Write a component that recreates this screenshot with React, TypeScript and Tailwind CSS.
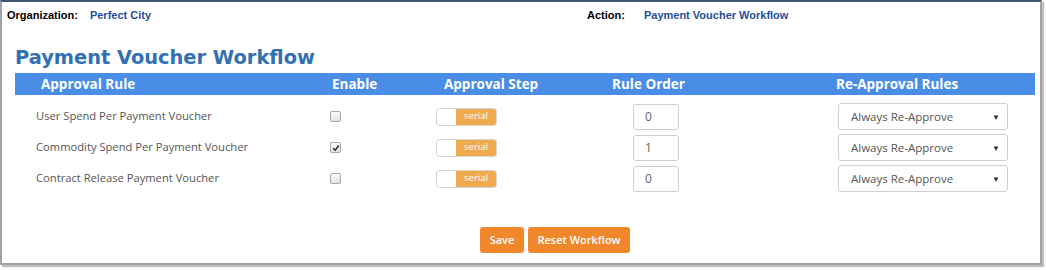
const RULES = [
  { label: 'User Spend Per Payment Voucher', enabled: false, order: '0' },
  { label: 'Commodity Spend Per Payment Voucher', enabled: true, order: '1' },
  { label: 'Contract Release Payment Voucher', enabled: false, order: '0' },
]

const COLS = 'grid grid-cols-[310px_105px_170px_220px_215px]'

function Toggle() {
  return (
    <div className="flex h-[18px] w-[61px] rounded-[3px] border border-[#d6d6d6] overflow-hidden">
      <div className="w-[19px] bg-white" />
      <div className="flex-1 bg-[#eeaa4d] text-white text-[9.5px] flex items-center justify-center">
        serial
      </div>
    </div>
  )
}

function Checkbox({ checked }: { checked: boolean }) {
  return (
    <div className="w-[11px] h-[11px] rounded-[2px] border border-[#a8a8a8] bg-gradient-to-b from-[#fbfbfb] to-[#e2e2e2] flex items-center justify-center">
      {checked && (
        <svg viewBox="0 0 10 10" className="w-[8px] h-[8px]">
          <path d="M1.5 5.2 L4 7.6 L8.6 1.8" fill="none" stroke="#222" strokeWidth="1.8" />
        </svg>
      )}
    </div>
  )
}

export default function App() {
  return (
    <div className="w-[1046px] h-[270px] bg-white">
      <div
        className="w-[1042px] h-[265px] bg-white border-2 border-[#a3a3a3] border-t-[#3f5678] shadow-[2px_2px_1px_rgba(0,0,0,0.25)] flex flex-col"
        style={{ fontFamily: '"Open Sans", sans-serif' }}
      >
        {/* top info line */}
        <div
          className="flex items-center h-[26px] text-[11px] font-bold"
          style={{ fontFamily: '"Liberation Sans", Arial, sans-serif' }}
        >
          <span className="ml-[5px] text-black">Organization:</span>
          <span className="ml-[12px] text-[#1f4f9c]">Perfect City</span>
          <span className="ml-[436px] text-black">Action:</span>
          <span className="ml-[19px] text-[#1f4f9c]">Payment Voucher Workflow</span>
        </div>

        <h1
          className="mt-[17px] ml-[13px] text-[19.4px] leading-[26px] font-bold text-[#3170b2]"
          style={{ fontFamily: '"DejaVu Sans", Verdana, sans-serif' }}
        >
          Payment Voucher Workflow
        </h1>

        <div className="ml-[13px] mt-[2px] w-[1020px]">
          <div className={`${COLS} h-[22px] items-center bg-[#4a8de6] text-white text-[13.5px] font-bold`}>
            <div className="pl-[26px]">Approval Rule</div>
            <div className="pl-[7px]">Enable</div>
            <div className="pl-[14px]">Approval Step</div>
            <div className="pl-[12px]">Rule Order</div>
            <div className="pl-[16px]">Re-Approval Rules</div>
          </div>

          <div className="pt-[6px]">
            {RULES.map((r) => (
              <div key={r.label} className={`${COLS} h-[31px] items-center`}>
                <div className="pl-[21px] text-[11.2px] text-[#555]">{r.label}</div>
                <div className="pl-[5px]">
                  <Checkbox checked={r.enabled} />
                </div>
                <div className="pl-[6px]">
                  <Toggle />
                </div>
                <div className="pl-[33px]">
                  <div className="w-[46px] h-[26px] border border-[#cfcfcf] rounded-[3px] flex items-center pl-[11px] text-[12px] text-[#666]">
                    {r.order}
                  </div>
                </div>
                <div className="pl-[18px]">
                  <div className="w-[170px] h-[27px] border border-[#cfcfcf] rounded-[3px] flex items-center justify-between pl-[12px] pr-[7px] text-[11.5px] text-[#555]">
                    <span>Always Re-Approve</span>
                    <span className="text-[8px] text-[#333]">▼</span>
                  </div>
                </div>
              </div>
            ))}
          </div>
        </div>

        <div className="flex gap-[4px] mt-[33px] ml-[478px]">
          <button className="h-[26px] w-[44px] rounded-[3px] bg-[#f0872b] text-white text-[11px] font-semibold">
            Save
          </button>
          <button className="h-[26px] w-[102px] rounded-[3px] bg-[#f0872b] text-white text-[11px] font-semibold">
            Reset Workflow
          </button>
        </div>
      </div>
    </div>
  )
}
